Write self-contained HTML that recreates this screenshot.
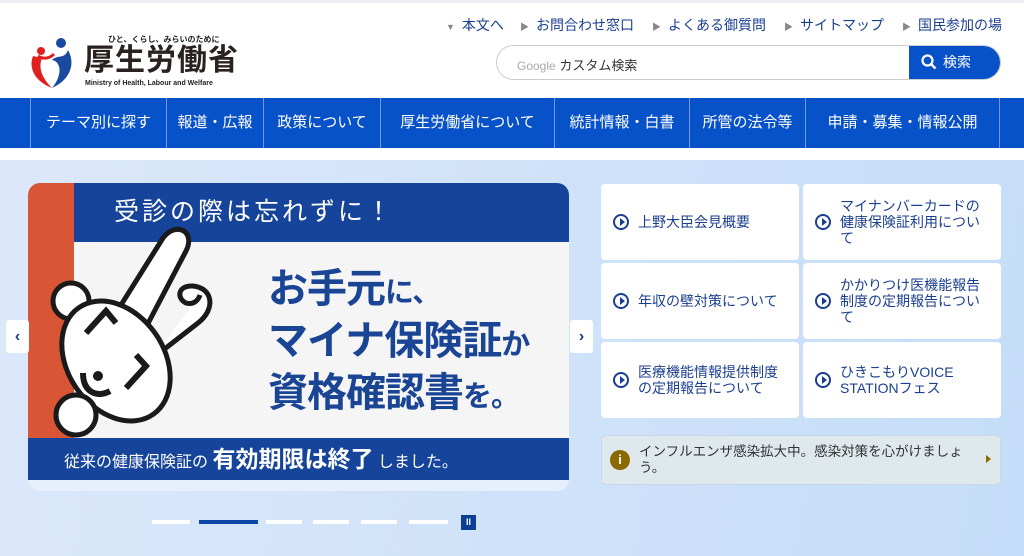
<!DOCTYPE html>
<html><head><meta charset="utf-8"><style>
*{margin:0;padding:0;box-sizing:border-box}
body{width:1024px;height:556px;overflow:hidden;font-family:"Liberation Sans","Noto Sans CJK JP",sans-serif;background:#fff;position:relative}
.a{position:absolute}
.util{top:15px;font-size:14px;color:#1b3f8f;white-space:nowrap}
.util span{color:#888;font-size:9px;margin-right:7px}
nav{position:absolute;top:98px;left:0;width:1024px;height:50px;background:#0852c9}
nav div{position:absolute;top:0;height:50px;line-height:50px;color:#fff;font-size:15px;text-align:center;border-left:1px solid #6d98df}
main{position:absolute;top:160px;left:0;width:1024px;height:396px;background:linear-gradient(100deg,#dce8fa,#c4ddf8)}
.card{position:absolute;background:#fff;border-radius:4px;color:#1b3f8f;font-size:14px;line-height:16px;display:flex;align-items:center;padding-left:37px;padding-right:20px}
.card:before{content:"";position:absolute;left:12px;top:50%;margin-top:-8px;width:12px;height:12px;border:2px solid #1b3f8f;border-radius:50%}
.card:after{content:"";position:absolute;left:19px;top:50%;margin-top:-4px;border-left:5px solid #1b3f8f;border-top:4px solid transparent;border-bottom:4px solid transparent}
.dot{position:absolute;top:520px;height:4px;background:#fff}
</style></head><body>
<div class="a" style="top:0;left:0;width:1024px;height:3px;background:#eef0f4"></div>
<svg class="a" style="left:28px;top:34px" width="50" height="56" viewBox="0 0 50 56">
<circle cx="13" cy="17" r="4" fill="#e02020"/>
<circle cx="33" cy="9" r="5" fill="#1a4aa0"/>
<path d="M5 22 C0 35 8 48 24 54 C14 44 10 34 14 24 Z" fill="#e02020"/>
<path d="M24 54 C42 46 48 30 40 16 C36 26 30 20 24 26 C34 28 34 42 24 54Z" fill="#1a4aa0"/>
<path d="M10 22 C16 26 22 24 26 20" stroke="#e02020" stroke-width="3" fill="none"/>
</svg>
<div class="a" style="left:108px;top:34px;font-size:8px;color:#222;font-weight:bold">ひと、くらし、みらいのために</div>
<div class="a" style="left:84px;top:44px;font-size:30px;font-weight:bold;color:#2a2220;letter-spacing:1px;line-height:34px">厚生労働省</div>
<div class="a" style="left:85px;top:80px;font-size:7px;color:#222;font-weight:bold">Ministry of Health, Labour and Welfare</div>
<div class="a util" style="left:446px"><span>▼</span>本文へ</div>
<div class="a util" style="left:520px"><span>▶</span>お問合わせ窓口</div>
<div class="a util" style="left:652px"><span>▶</span>よくある御質問</div>
<div class="a util" style="left:784px"><span>▶</span>サイトマップ</div>
<div class="a util" style="left:902px"><span>▶</span>国民参加の場</div>
<div class="a" style="left:496px;top:45px;width:505px;height:35px;border:1px solid #ccc;border-radius:18px;overflow:hidden">
<div class="a" style="left:20px;top:9px;font-size:13px;color:#333"><span style="color:#aaa;font-size:12px">Google</span> カスタム検索</div>
<div class="a" style="right:0;top:0;width:91px;height:35px;background:#0852c9;color:#fff;font-size:14px;line-height:33px;padding-left:12px">
<svg width="16" height="16" viewBox="0 0 16 16" style="vertical-align:-3px;margin-right:6px"><circle cx="6.5" cy="6.5" r="5" stroke="#fff" stroke-width="2.2" fill="none"/><path d="M10 10 L14.5 14.5" stroke="#fff" stroke-width="2.5"/></svg>検索</div>
</div>
<nav>
<div style="left:30px;width:136px">テーマ別に探す</div>
<div style="left:166px;width:97px">報道・広報</div>
<div style="left:263px;width:117px">政策について</div>
<div style="left:380px;width:174px">厚生労働省について</div>
<div style="left:554px;width:135px">統計情報・白書</div>
<div style="left:689px;width:116px">所管の法令等</div>
<div style="left:805px;width:194px">申請・募集・情報公開</div>
<div style="left:999px;width:25px"></div>
</nav>
<main></main>
<div class="a" style="left:28px;top:183px;width:541px;height:308px;border-radius:12px;background:#e6effb;overflow:hidden">
<div class="a" style="left:0;top:0;width:541px;height:255px;background:#f5f5f5"></div>
<div class="a" style="left:0;top:0;width:46px;height:255px;background:#d85535"></div>
<div class="a" style="left:46px;top:0;width:495px;height:59px;background:#15449a;color:#fff;font-size:25px;line-height:59px;padding-left:40px;letter-spacing:3px">受診の際は忘れずに！</div>
<svg class="a" style="left:0;top:0" width="230" height="260" viewBox="0 0 230 260">
<g stroke="#1a1a1a" stroke-width="5" fill="#fff" stroke-linejoin="round">
<path d="M88 130 L135 55 C148 38 168 48 158 68 L115 150 Z"/>
<path d="M125 175 L170 140 C188 126 185 105 165 103 C150 102 148 115 158 120 C165 122 170 118 172 112"/>
<circle cx="43" cy="118" r="18"/>
<ellipse cx="88" cy="178" rx="48" ry="65" transform="rotate(-35 88 178)"/>
<circle cx="48" cy="232" r="20"/>
</g>
<g stroke="#1a1a1a" stroke-width="6" fill="none"><path d="M58 150 L78 128 L88 140"/><path d="M98 205 L118 183 L108 172"/><path d="M55 190 C55 210 70 215 82 208"/></g>
<circle cx="70" cy="193" r="5" fill="#1a1a1a"/>
</svg>
<div class="a" style="left:240px;top:82px;color:#1a4595;font-size:40px;font-weight:bold;line-height:48px;letter-spacing:-1px;white-space:nowrap">お手元<span style="font-size:29px">に、</span><br>マイナ保険証<span style="font-size:29px">か</span><br>資格確認書<span style="font-size:29px">を。</span></div>
<div class="a" style="left:0;top:255px;width:541px;height:42px;background:#15449a;color:#fff;font-size:16px;line-height:42px;padding-left:36px">従来の健康保険証の <b style="font-size:23px">有効期限は終了</b> しました。</div>
</div>
<div class="a" style="left:6px;top:320px;width:23px;height:33px;background:#fff;border-radius:3px;color:#1b3f8f;font-size:16px;font-weight:bold;text-align:center;line-height:33px">‹</div>
<div class="a" style="left:570px;top:320px;width:23px;height:33px;background:#fff;border-radius:3px;color:#1b3f8f;font-size:16px;font-weight:bold;text-align:center;line-height:33px">›</div>
<div class="dot" style="left:152px;width:38px"></div>
<div class="dot" style="left:199px;width:59px;background:#0b47a8"></div>
<div class="dot" style="left:266px;width:36px"></div>
<div class="dot" style="left:313px;width:36px"></div>
<div class="dot" style="left:361px;width:36px"></div>
<div class="dot" style="left:409px;width:39px"></div>
<div class="a" style="left:461px;top:515px;width:15px;height:15px;background:#0b3e94;color:#fff;font-size:9px;font-weight:bold;text-align:center;line-height:15px">II</div>
<div class="card" style="left:601px;top:184px;width:198px;height:76px">上野大臣会見概要</div>
<div class="card" style="left:803px;top:184px;width:198px;height:76px">マイナンバーカードの健康保険証利用について</div>
<div class="card" style="left:601px;top:263px;width:198px;height:76px">年収の壁対策について</div>
<div class="card" style="left:803px;top:263px;width:198px;height:76px">かかりつけ医機能報告制度の定期報告について</div>
<div class="card" style="left:601px;top:342px;width:198px;height:76px">医療機能情報提供制度の定期報告について</div>
<div class="card" style="left:803px;top:342px;width:198px;height:76px">ひきこもりVOICE STATIONフェス</div>
<div class="a" style="left:601px;top:435px;width:400px;height:50px;background:#dfe8ed;border:1px solid #c9d8e2;border-radius:4px">
<div class="a" style="left:8px;top:14px;width:20px;height:20px;border-radius:50%;background:#8a6a00;color:#fff;font-size:13px;font-weight:bold;text-align:center;line-height:20px">i</div>
<div class="a" style="left:37px;top:8px;width:340px;font-size:13.5px;line-height:16px;color:#333">インフルエンザ感染拡大中。感染対策を心がけましょう。</div>
<div class="a" style="left:384px;top:19px;border-left:5px solid #8a6a00;border-top:4px solid transparent;border-bottom:4px solid transparent"></div>
</div>
</body></html>
